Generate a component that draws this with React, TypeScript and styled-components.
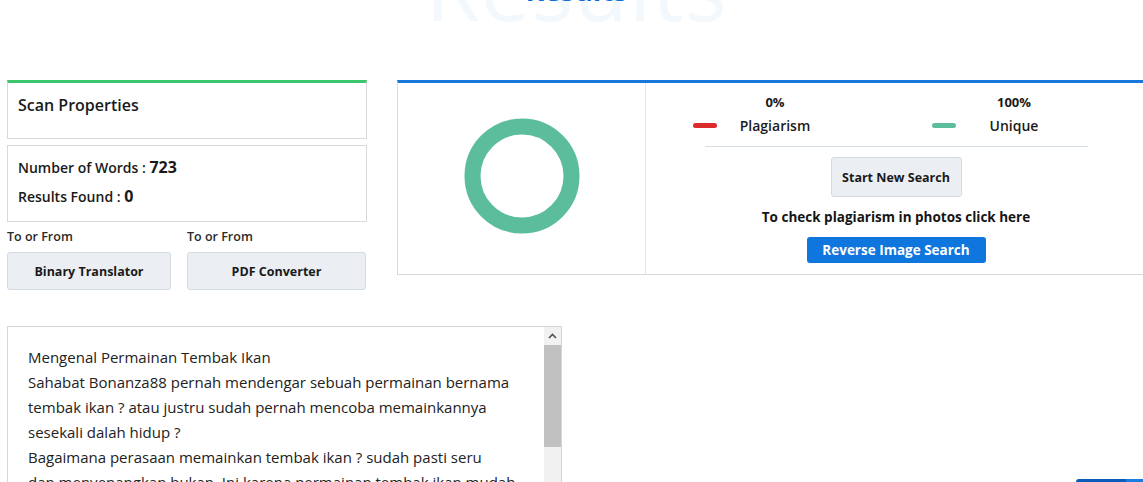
import React from "react";
import styled, { createGlobalStyle } from "styled-components";

const Global = createGlobalStyle`
  html, body { margin: 0; padding: 0; overflow: hidden; background: #fff; }
  body { font-family: "Open Sans", "Liberation Sans", sans-serif; color: #1b1b1b; }
  * { box-sizing: border-box; }
`;

const Page = styled.div`
  width: 1143px;
  height: 482px;
  padding: 0 7px;
  overflow: hidden;
`;

const Header = styled.div`
  position: relative;
  height: 80px;
  display: flex;
  justify-content: center;
  padding-left: 10px;
`;

const BgTitle = styled.div`
  margin-top: -57px;
  font-size: 88px;
  line-height: 88px;
  font-weight: 500;
  color: #f3f8fd;
  letter-spacing: 1px;
`;

const Title = styled.div`
  position: absolute;
  top: -30px;
  left: 0;
  right: 0;
  padding-left: 10px;
  text-align: center;
  font-size: 28px;
  line-height: 40px;
  font-weight: 700;
  color: #0e6fd8;
`;

const Row = styled.div`
  display: flex;
  gap: 30px;
  align-items: flex-start;
`;

const LeftCol = styled.div`
  width: 360px;
  flex-shrink: 0;
  display: flex;
  flex-direction: column;
`;

const Card = styled.div<{ $accent?: string; $h: number; $mt?: number; $pt?: number }>`
  height: ${(p) => p.$h}px;
  margin-top: ${(p) => p.$mt ?? 0}px;
  border: 1px solid #d9d9d9;
  border-top: ${(p) => (p.$accent ? `3px solid ${p.$accent}` : "1px solid #d9d9d9")};
  padding: ${(p) => p.$pt ?? 11}px 10px 0;
`;

const CardTitle = styled.div`
  font-size: 16px;
  font-weight: 600;
  line-height: 22px;
  color: #1a1a1a;
`;

const Stat = styled.div`
  font-size: 14px;
  font-weight: 600;
  line-height: 28px;
  color: #1a1a1a;
  b {
    font-size: 16px;
    font-weight: 700;
  }
`;

const Tools = styled.div`
  display: grid;
  grid-template-columns: 180px 180px;
  margin-top: 7px;
`;

const Tool = styled.div`
  display: flex;
  flex-direction: column;
`;

const ToolLabel = styled.div`
  font-size: 12.5px;
  font-weight: 600;
  line-height: 16px;
  color: #2a2a2a;
`;

const GreyButton = styled.div<{ $w: number; $h?: number; $mt?: number }>`
  width: ${(p) => p.$w}px;
  height: ${(p) => p.$h ?? 38}px;
  margin-top: ${(p) => p.$mt ?? 7}px;
  background: #ebeff3;
  border: 1px solid #d3dae2;
  border-radius: 3px;
  display: flex;
  align-items: center;
  justify-content: center;
  font-size: 12.5px;
  font-weight: 700;
  color: #1a1a1a;
`;

const ResultPanel = styled.div`
  width: 760px;
  flex-shrink: 0;
  height: 195px;
  border: 1px solid #d9d9d9;
  border-top: 3px solid #1877dc;
  border-right: none;
  display: grid;
  grid-template-columns: 248px 1fr;
`;

const ChartCell = styled.div`
  border-right: 1px solid #e3e6ea;
  display: flex;
  align-items: center;
  justify-content: center;
  padding-bottom: 5px;
`;

const InfoCell = styled.div`
  display: flex;
  flex-direction: column;
  align-items: center;
  padding-top: 8px;
  width: 500px;
`;

const Legend = styled.div`
  display: grid;
  grid-template-columns: 239px 239px;
  width: 500px;
  padding-left: 47px;
`;

const LegendItem = styled.div`
  display: grid;
  grid-template-columns: 24px 116px;
  grid-template-rows: 22px 24px;
  align-items: center;
`;

const Dash = styled.span<{ $c: string }>`
  grid-row: 2;
  grid-column: 1;
  height: 5px;
  border-radius: 3px;
  background: ${(p) => p.$c};
`;

const Pct = styled.span`
  grid-row: 1;
  grid-column: 2;
  text-align: center;
  font-size: 13px;
  font-weight: 700;
  color: #1a1a1a;
`;

const LegendLabel = styled.span`
  grid-row: 2;
  grid-column: 2;
  text-align: center;
  font-size: 14px;
  font-weight: 600;
  color: #1a1a1a;
`;

const Rule = styled.div`
  width: 383px;
  height: 1px;
  background: #d5dde5;
  margin-top: 9px;
  margin-left: 0;
`;

const ActionWrap = styled.div`
  display: flex;
  flex-direction: column;
  align-items: center;
  margin-left: 0;
`;

const Hint = styled.div`
  margin-top: 10px;
  font-size: 13.5px;
  font-weight: 700;
  line-height: 20px;
  color: #151515;
`;

const BlueButton = styled.div`
  margin-top: 10px;
  width: 179px;
  height: 26px;
  border-radius: 3px;
  background: #0f76de;
  color: #fff;
  font-size: 13.5px;
  font-weight: 700;
  display: flex;
  align-items: center;
  justify-content: center;
`;

const TextBox = styled.div`
  margin-top: 36px;
  width: 555px;
  height: 170px;
  border: 1px solid #d6d6d6;
  display: flex;
`;

const TextContent = styled.div`
  flex: 1;
  padding: 18px 0 0 20px;
  font-size: 15px;
  line-height: 25px;
  color: #222;
  white-space: pre-line;
  overflow: hidden;
`;

const ScrollBar = styled.div`
  width: 17px;
  background: #f1f1f1;
  display: flex;
  flex-direction: column;
  align-items: center;
`;

const ScrollArrow = styled.div`
  height: 17px;
  width: 17px;
  display: flex;
  align-items: center;
  justify-content: center;
`;

const ScrollThumb = styled.div`
  width: 17px;
  height: 102px;
  margin-top: 1px;
  background: #c1c1c1;
`;

const CornerTab = styled.div`
  position: fixed;
  right: 0;
  bottom: -40px;
  width: 67px;
  height: 43px;
  border-radius: 3px 0 0 0;
  background: linear-gradient(to right, #0a5cb8 0 74%, #1a7de0 74% 100%);
`;

const text = `Mengenal Permainan Tembak Ikan
Sahabat Bonanza88 pernah mendengar sebuah permainan bernama
tembak ikan ? atau justru sudah pernah mencoba memainkannya
sesekali dalah hidup ?
Bagaimana perasaan memainkan tembak ikan ? sudah pasti seru
dan menyenangkan bukan. Ini karena permainan tembak ikan mudah`;

export default function App() {
  return (
    <Page>
      <Global />
      <Header>
        <BgTitle>Results</BgTitle>
        <Title>Results</Title>
      </Header>
      <Row>
        <LeftCol>
          <Card $accent="#3cc76f" $h={59}>
            <CardTitle>Scan Properties</CardTitle>
          </Card>
          <Card $h={77} $mt={6} $pt={7}>
            <Stat>
              Number of Words : <b>723</b>
            </Stat>
            <Stat>
              Results Found : <b>0</b>
            </Stat>
          </Card>
          <Tools>
            <Tool>
              <ToolLabel>To or From</ToolLabel>
              <GreyButton $w={164}>Binary Translator</GreyButton>
            </Tool>
            <Tool>
              <ToolLabel>To or From</ToolLabel>
              <GreyButton $w={179}>PDF Converter</GreyButton>
            </Tool>
          </Tools>
        </LeftCol>
        <ResultPanel>
          <ChartCell>
            <svg width="118" height="118" viewBox="0 0 118 118">
              <circle cx="59" cy="59" r="49.5" fill="none" stroke="#5bbd9c" strokeWidth="16" />
            </svg>
          </ChartCell>
          <InfoCell>
            <Legend>
              <LegendItem>
                <Dash $c="#dc2b2b" />
                <Pct>0%</Pct>
                <LegendLabel>Plagiarism</LegendLabel>
              </LegendItem>
              <LegendItem>
                <Dash $c="#5bbd9c" />
                <Pct>100%</Pct>
                <LegendLabel>Unique</LegendLabel>
              </LegendItem>
            </Legend>
            <Rule />
            <ActionWrap>
              <GreyButton $w={131} $h={40} $mt={10}>
                Start New Search
              </GreyButton>
              <Hint>To check plagiarism in photos click here</Hint>
              <BlueButton>Reverse Image Search</BlueButton>
            </ActionWrap>
          </InfoCell>
        </ResultPanel>
      </Row>
      <TextBox>
        <TextContent>{text}</TextContent>
        <ScrollBar>
          <ScrollArrow>
            <svg width="9" height="6" viewBox="0 0 9 6">
              <path d="M1 5 L4.5 1.5 L8 5" fill="none" stroke="#505050" strokeWidth="1.6" />
            </svg>
          </ScrollArrow>
          <ScrollThumb />
        </ScrollBar>
      </TextBox>
      <CornerTab />
    </Page>
  );
}
